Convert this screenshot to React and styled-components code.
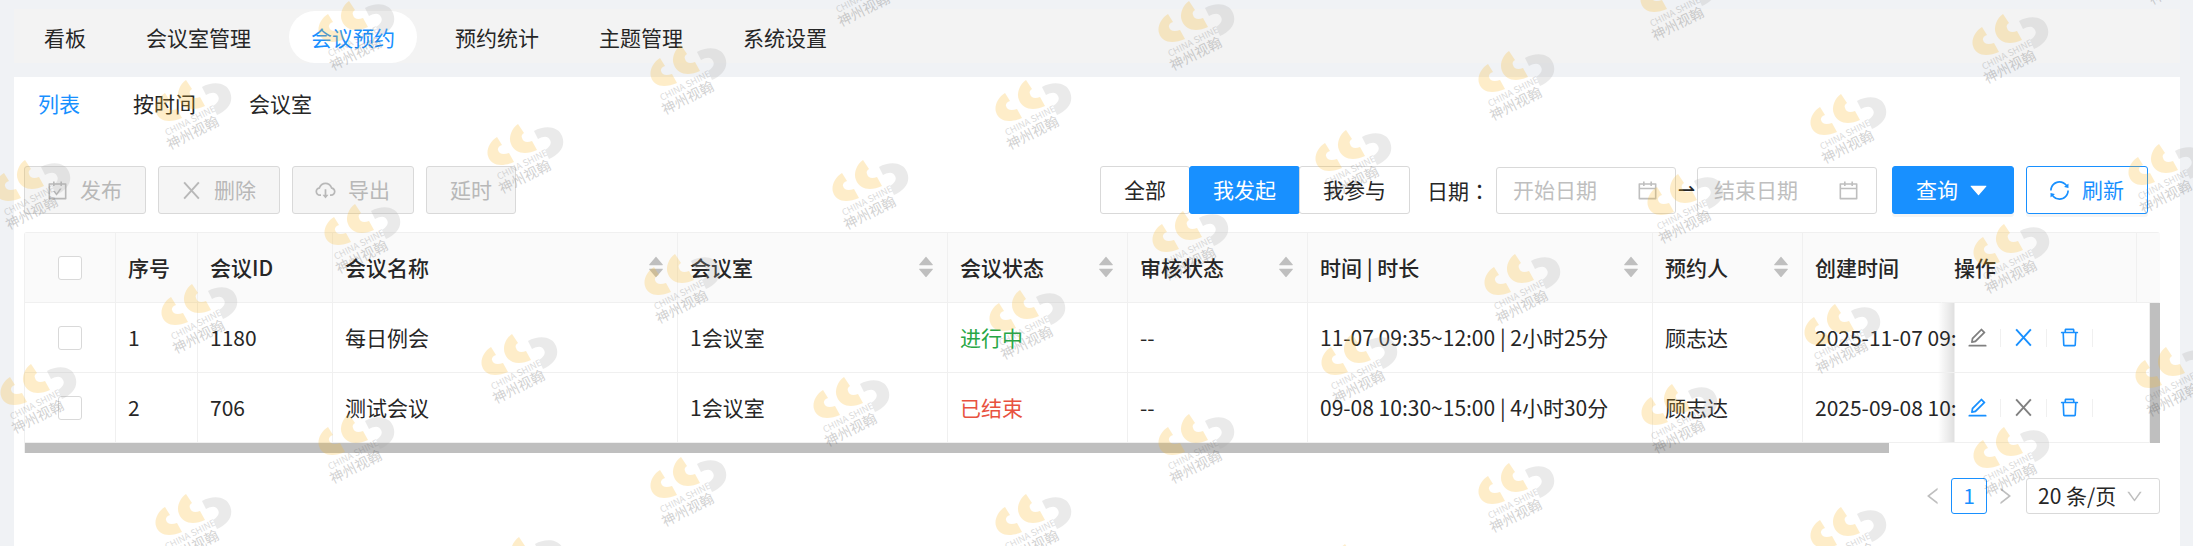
import React from "react";
import styled, { createGlobalStyle, css } from "styled-components";
import {
  AiOutlineCalendar,
  AiOutlineCarryOut,
  AiOutlineCloudDownload,
  AiOutlineDelete,
  AiOutlineDown,
  AiOutlineEdit,
  AiOutlineLeft,
  AiOutlineRight,
  AiOutlineSync,
  AiFillCaretDown,
  AiFillCaretUp,
} from "react-icons/ai";

const navItems = ["看板", "会议室管理", "会议预约", "预约统计", "主题管理", "系统设置"];
const viewItems = ["列表", "按时间", "会议室"];
const scopes = ["全部", "我发起", "我参与"];

const columns = [
  { title: "序号", width: 82 },
  { title: "会议ID", width: 135 },
  { title: "会议名称", width: 345, sort: true },
  { title: "会议室", width: 270, sort: true },
  { title: "会议状态", width: 180, sort: true },
  { title: "审核状态", width: 180, sort: true },
  { title: "时间 | 时长", width: 345, sort: true },
  { title: "预约人", width: 150, sort: true },
  { title: "创建时间" },
];

const meetings = [
  {
    no: 1,
    id: "1180",
    name: "每日例会",
    room: "1会议室",
    status: "进行中",
    color: "#28a745",
    audit: "--",
    time: "11-07 09:35~12:00 | 2小时25分",
    owner: "顾志达",
    created: "2025-11-07 09:",
    running: true,
  },
  {
    no: 2,
    id: "706",
    name: "测试会议",
    room: "1会议室",
    status: "已结束",
    color: "#e8523f",
    audit: "--",
    time: "09-08 10:30~15:00 | 4小时30分",
    owner: "顾志达",
    created: "2025-09-08 10:",
    running: false,
  },
];

const marks = [
  [318, 1], [155, 80], [650, 45], [487, 124], [-6, 160], [324, 204],
  [826, -43], [1158, 1], [995, 80], [1315, 130], [832, 160], [1152, 211],
  [1640, -29], [1972, 14], [1478, 51], [1810, 94], [1647, 174], [2128, 144],
  [1973, 224], [2137, -65], [644, 254], [161, 284], [481, 334], [0, 364],
  [318, 414], [155, 494], [650, 457], [488, 537], [989, 290], [813, 377],
  [1321, 334], [1158, 414], [995, 494], [1314, 544], [1484, 254], [1804, 304],
  [1641, 384], [1478, 463], [2135, 347], [1973, 427], [1810, 507],
];

function CrossIcon() {
  return (
    <svg width="20" height="20" viewBox="0 0 20 20" fill="none" stroke="currentColor" strokeWidth="1.7">
      <path d="M3.6 3 16.4 17M16.4 3 3.6 17" />
    </svg>
  );
}

function Watermark() {
  return (
    <MarkLayer aria-hidden="true">
      {marks.map(([x, y]) => (
        <Mark key={x + "_" + y} style={{ left: x, top: y }} viewBox="0 0 80 76">
          <path fill="#fbb824" d="M10 13C3 17-1 26 1 32c3 10 14 11 26 6l-5-9c-6 2-10 1-11-3-.5-2 1-4 4-5z" />
          <path fill="#fbb824" d="M31 0C25 4 21 13 24 20c4 10 15 11 26 6l-5-9c-5 2-9 1-10-3-1-2 0-4 2-5z" />
          <path fill="#aaa" d="M47 7c11-6 24-5 28 5 4 10-2 18-13 23l-4-9c5-3 7-7 5-10-2-4-6-4-12-1z" />
          <text transform="translate(12 56) rotate(-27)" fontSize="9" fill="#6a6a6a">CHINA SHINE</text>
          <text transform="translate(15 70) rotate(-27)" fontSize="14" fill="#444">神州视翰</text>
        </Mark>
      ))}
    </MarkLayer>
  );
}

function RowActions({ running }) {
  return (
    <Actions>
      <IconButton aria-label="编辑" $muted={running}><AiOutlineEdit /></IconButton>
      <Divider />
      <IconButton aria-label="取消" $muted={!running}><CrossIcon /></IconButton>
      <Divider />
      <IconButton aria-label="删除"><AiOutlineDelete /></IconButton>
      <Divider />
    </Actions>
  );
}

function Columns() {
  return (
    <>
      <Col $width={91} />
      {columns.map((c) => <Col key={c.title} $width={c.width} />)}
      <Col $width={195} />
    </>
  );
}

function MeetingTable() {
  return (
    <TableBox>
      <Table>
        <colgroup>
          <Columns />
          <Col $width={23} />
        </colgroup>
        <thead>
          <tr>
            <Th $center><Checkbox aria-label="全选" /></Th>
            {columns.map((c) => (
              <Th key={c.title} $open={!c.sort && !c.width}>
                <ThInner>
                  {c.title}
                  {c.sort && <Sorter><AiFillCaretUp /><AiFillCaretDown /></Sorter>}
                </ThInner>
              </Th>
            ))}
            <Th>操作</Th>
            <Th as="td" $open />
          </tr>
        </thead>
      </Table>
      <BodyWrap>
        <Table>
          <colgroup>
            <Columns />
          </colgroup>
          <tbody>
            {meetings.map((m) => (
              <tr key={m.id}>
                <Td $center><Checkbox aria-label={m.name} /></Td>
                <Td>{m.no}</Td>
                <Td>{m.id}</Td>
                <Td>{m.name}</Td>
                <Td>{m.room}</Td>
                <Td><Status $color={m.color}>{m.status}</Status></Td>
                <Td>{m.audit}</Td>
                <Td>{m.time}</Td>
                <Td>{m.owner}</Td>
                <Td $shadow>{m.created}</Td>
                <Td><RowActions running={m.running} /></Td>
              </tr>
            ))}
          </tbody>
        </Table>
        <VScroll />
      </BodyWrap>
      <HScroll />
    </TableBox>
  );
}

export default function App() {
  return (
    <Page>
      <GlobalStyle />
      <NavBar>
        {navItems.map((item) => (
          <NavLink href="#" key={item} $active={item === "会议预约"}>{item}</NavLink>
        ))}
      </NavBar>
      <Panel>
        <ViewTabs>
          {viewItems.map((item) => (
            <ViewLink href="#" key={item} $active={item === "列表"}>{item}</ViewLink>
          ))}
        </ViewTabs>
        <Toolbar>
          <Group>
            <Button disabled><AiOutlineCarryOut />发布</Button>
            <Button disabled><CrossIcon />删除</Button>
            <Button disabled><AiOutlineCloudDownload />导出</Button>
            <Button disabled>延时</Button>
          </Group>
          <Filters>
            <Scope>
              {scopes.map((s) => <Button key={s} $primary={s === "我发起"}>{s}</Button>)}
            </Scope>
            <DateLabel htmlFor="start">日期：</DateLabel>
            <DateBox>
              <DateInput id="start" placeholder="开始日期" />
              <AiOutlineCalendar />
            </DateBox>
            <Arrow>⇀</Arrow>
            <DateBox>
              <DateInput aria-label="结束日期" placeholder="结束日期" />
              <AiOutlineCalendar />
            </DateBox>
            <Group $indent>
              <Button $primary $raised>查询<AiFillCaretDown /></Button>
              <Button $outline $raised><AiOutlineSync />刷新</Button>
            </Group>
          </Filters>
        </Toolbar>
        <MeetingTable />
        <Pager>
          <PageArrow aria-label="上一页"><AiOutlineLeft /></PageArrow>
          <PageNumber>1</PageNumber>
          <PageArrow aria-label="下一页"><AiOutlineRight /></PageArrow>
          <SizeBox>
            <SizeSelect aria-label="每页条数" defaultValue="20">
              <option value="20">20 条/页</option>
              <option value="50">50 条/页</option>
            </SizeSelect>
            <AiOutlineDown />
          </SizeBox>
        </Pager>
      </Panel>
      <Watermark />
    </Page>
  );
}

const GlobalStyle = createGlobalStyle`
  * {
    box-sizing: border-box;
  }
  body {
    margin: 0;
    background: #f0f2f5;
    overflow: hidden;
  }
  body, button, input, select {
    font-family: "Noto Sans CJK SC", sans-serif;
    font-size: 21px;
    line-height: 32px;
    color: #262626;
  }
  svg {
    flex: none;
  }
`;

const Page = styled.div`
  position: relative;
  display: flex;
  flex-direction: column;
  min-height: 100vh;
  padding: 9px 13px 0 14px;
  background: #f0f2f5;
  overflow: hidden;
`;

const NavBar = styled.nav`
  display: flex;
  gap: 16px;
  height: 54px;
  padding: 2px 8px 0;
  background: #f3f3f3;
`;

const NavLink = styled.a`
  padding: 10px 22px;
  border-radius: 26px;
  text-decoration: none;
  color: ${(p) => (p.$active ? "#1890ff" : "#262626")};
  background: ${(p) => (p.$active ? "#fff" : "transparent")};
`;

const Panel = styled.main`
  flex: 1;
  margin-top: 14px;
  padding: 10px 20px 24px 10px;
  background: #fff;
`;

const ViewTabs = styled.nav`
  display: flex;
  gap: 53px;
  padding-left: 14px;
`;

const ViewLink = styled.a`
  text-decoration: none;
  color: ${(p) => (p.$active ? "#1890ff" : "#262626")};
`;

const Toolbar = styled.div`
  display: flex;
  justify-content: space-between;
  margin-top: 47px;
  padding-right: 12px;
`;

const Group = styled.div`
  display: flex;
  gap: 12px;
  margin-left: ${(p) => (p.$indent ? "15px" : "0")};
`;

const Button = styled.button`
  display: flex;
  align-items: center;
  gap: 11px;
  height: 48px;
  padding: 0 23px 2px;
  border: 1px solid #d9d9d9;
  border-radius: 3px;
  background: #fff;
  white-space: nowrap;

  svg {
    width: 23px;
    height: 23px;
    margin: 2px 0 0 -2px;
  }
  &:disabled {
    color: #b8b8b8;
    background: #f5f5f5;
  }
  ${(p) => p.$primary && css`
    color: #fff;
    background: #1890ff;
    border-color: #1890ff;
  `}
  ${(p) => p.$outline && css`
    color: #1890ff;
    border-color: #1890ff;
  `}
  ${(p) => p.$raised && css`
    box-shadow: 0 3px 0 rgba(0, 0, 0, 0.04);
  `}
`;

const Filters = styled.div`
  display: flex;
  align-items: center;
`;

const Scope = styled.div`
  display: flex;

  button + button {
    margin-left: -1px;
  }
`;

const DateLabel = styled.label`
  width: 69px;
  margin-left: 17px;
  font-family: "Noto Sans CJK TC", sans-serif;
  white-space: nowrap;
`;

const DateBox = styled.div`
  display: flex;
  align-items: center;
  width: 180px;
  height: 47px;
  padding: 0 16px;
  border: 1px solid #d9d9d9;
  border-radius: 3px;
  color: #bfbfbf;

  svg {
    width: 23px;
    height: 23px;
  }
`;

const DateInput = styled.input`
  flex: 1;
  min-width: 0;
  padding: 0 0 2px;
  border: 0;
  outline: 0;
  background: transparent;

  &::placeholder {
    color: #bfbfbf;
  }
`;

const Arrow = styled.span`
  width: 21px;
  text-align: center;
  font-family: "DejaVu Sans", sans-serif;
`;

const TableBox = styled.div`
  margin-top: 18px;
  border-top: 1px solid #f0f0f0;
  border-left: 1px solid #f0f0f0;
  border-radius: 3px 3px 0 0;
`;

const Table = styled.table`
  width: 100%;
  table-layout: fixed;
  border-collapse: separate;
  border-spacing: 0;
`;

const Col = styled.col`
  width: ${(p) => (p.$width ? p.$width + "px" : "auto")};
`;

const cell = css`
  height: 70px;
  padding: 0 0 2px 12px;
  border-bottom: 1px solid #f0f0f0;
  border-right: 1px solid #f0f0f0;
  text-align: left;
  white-space: nowrap;
  ${(p) => p.$center && css`
    padding: 0;
    text-align: center;
  `}
`;

const Th = styled.th`
  ${cell}
  background: #fafafa;
  font-weight: 500;
  ${(p) => p.$open && css`
    border-right-color: transparent;
  `}
`;

const ThInner = styled.div`
  display: flex;
  align-items: center;
  justify-content: space-between;
  padding-right: 11px;
`;

const Sorter = styled.span`
  display: flex;
  flex-direction: column;
  color: #bfbfbf;

  svg {
    width: 20px;
    height: 20px;
  }
  svg + svg {
    margin-top: -8px;
  }
`;

const Td = styled.td`
  ${cell}
  ${(p) => p.$shadow && css`
    background: linear-gradient(to left, rgba(0, 0, 0, 0.12), transparent 16px);
  `}
`;

const Status = styled.span`
  color: ${(p) => p.$color};
`;

const Checkbox = styled.input.attrs({ type: "checkbox" })`
  appearance: none;
  display: block;
  width: 24px;
  height: 24px;
  margin: 0 auto;
  border: 1px solid #d9d9d9;
  border-radius: 3px;
  background: #fff;
`;

const Actions = styled.div`
  display: flex;
  align-items: center;
  gap: 12px;
  padding-top: 2px;
`;

const IconButton = styled.button`
  display: flex;
  justify-content: center;
  width: 21px;
  padding: 0;
  border: 0;
  background: none;
  color: ${(p) => (p.$muted ? "#808080" : "#1890ff")};

  svg {
    width: 23px;
    height: 23px;
  }
`;

const Divider = styled.span`
  width: 1px;
  height: 18px;
  background: #f0f0f0;
`;

const BodyWrap = styled.div`
  display: flex;
`;

const VScroll = styled.div`
  flex: none;
  width: 10px;
  background: #bfbfbf;
`;

const HScroll = styled.div`
  width: calc(100% - 271px);
  height: 10px;
  background: #bfbfbf;
`;

const Pager = styled.div`
  display: flex;
  align-items: center;
  justify-content: flex-end;
  margin-top: 25px;
`;

const PageArrow = styled.button`
  display: flex;
  justify-content: center;
  width: 36px;
  padding: 0;
  border: 0;
  background: none;
  color: #bfbfbf;

  svg {
    width: 22px;
    height: 22px;
  }
`;

const PageNumber = styled.button`
  width: 36px;
  height: 36px;
  padding: 0 0 2px;
  border: 1px solid #1890ff;
  border-radius: 3px;
  background: #fff;
  color: #1890ff;
`;

const SizeBox = styled.div`
  display: flex;
  align-items: center;
  width: 134px;
  height: 36px;
  margin-left: 3px;
  padding: 0 15px 0 11px;
  border: 1px solid #d9d9d9;
  border-radius: 3px;
  color: #bfbfbf;

  svg {
    width: 19px;
    height: 19px;
  }
`;

const SizeSelect = styled.select`
  appearance: none;
  flex: 1;
  min-width: 0;
  height: 34px;
  padding: 0 0 2px;
  border: 0;
  outline: 0;
  background: transparent;
`;

const MarkLayer = styled.div`
  position: absolute;
  inset: 0;
  overflow: hidden;
  pointer-events: none;
`;

const Mark = styled.svg`
  position: absolute;
  width: 80px;
  height: 76px;
  overflow: visible;
  opacity: 0.24;
`;
